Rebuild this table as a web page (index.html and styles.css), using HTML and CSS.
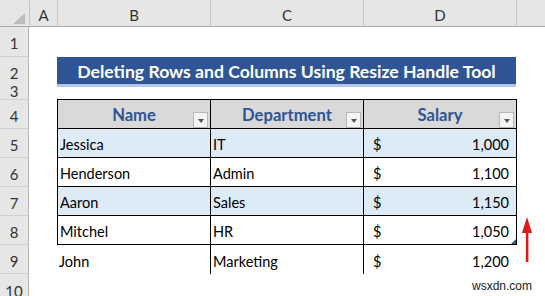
FILE: index.html
```html
<!DOCTYPE html>
<html>
<head>
<meta charset="utf-8">
<link rel="stylesheet" href="styles.css">
</head>
<body>
<div class="sheet">
  <div class="row row-head">
    <div class="corner"><span class="corner-tri"></span></div>
    <div class="ch">A</div>
    <div class="ch">B</div>
    <div class="ch">C</div>
    <div class="ch">D</div>
    <div class="ch"></div>
  </div>
  <div class="row row-1"><div class="rh">1</div></div>
  <div class="row"><div class="rh">2</div><div></div><div class="title">Deleting Rows and Columns Using Resize Handle Tool</div></div>
  <div class="row row-3"><div class="rh">3</div></div>
  <div class="row">
    <div class="rh">4</div><div></div>
    <div class="th">Name<span class="fb"></span></div>
    <div class="th">Department<span class="fb"></span></div>
    <div class="th th-last">Salary<span class="fb"></span></div>
  </div>
  <div class="row">
    <div class="rh">5</div><div></div>
    <div class="cell blue">Jessica</div>
    <div class="cell blue">IT</div>
    <div class="cell money blue"><span>$</span><span>1,000</span></div>
  </div>
  <div class="row">
    <div class="rh">6</div><div></div>
    <div class="cell">Henderson</div>
    <div class="cell">Admin</div>
    <div class="cell money"><span>$</span><span>1,100</span></div>
  </div>
  <div class="row">
    <div class="rh">7</div><div></div>
    <div class="cell blue">Aaron</div>
    <div class="cell blue">Sales</div>
    <div class="cell money blue"><span>$</span><span>1,150</span></div>
  </div>
  <div class="row">
    <div class="rh">8</div><div></div>
    <div class="cell">Mitchel</div>
    <div class="cell">HR</div>
    <div class="cell money"><span>$</span><span>1,050</span><span class="handle"></span></div>
  </div>
  <div class="row">
    <div class="rh">9</div><div></div>
    <div class="cell plain">John</div>
    <div class="cell plain lined">Marketing</div>
    <div class="cell money plain lined"><span>$</span><span>1,200</span></div>
  </div>
  <div class="row row-10"><div class="rh">10</div></div>
</div>
<svg class="arrow" width="16" height="50" viewBox="0 0 16 50">
  <polygon points="8,2 3,18 13,18" fill="#e0191b"/>
  <rect x="6.8" y="16" width="2.6" height="31" fill="#e0191b"/>
</svg>
<div class="mark">wsxdn.com</div>
</body>
</html>
```
FILE: styles.css
```css
* { box-sizing: border-box; }
html, body { margin: 0; padding: 0; }
body {
  width: 545px;
  height: 296px;
  overflow: hidden;
  position: relative;
  background: #fff;
  font-family: Lato, "Liberation Sans", sans-serif;
  color: #000;
}
.sheet { display: flex; flex-direction: column; }
.row {
  display: grid;
  grid-template-columns: 29px 28px 153px 153px 153px 1fr;
  height: 29px;
  flex: none;
}
.row-head {
  height: 27px;
  background: #e6e6e6;
  border-bottom: 1px solid #ababab;
}
.row-1 { height: 30px; }
.row-3 { height: 14px; }
.row-10 { height: 23px; }
.corner {
  display: flex;
  align-items: flex-end;
  justify-content: flex-end;
  padding: 0 4px 2px 0;
}
.corner-tri {
  width: 0; height: 0;
  border-left: 12px solid transparent;
  border-bottom: 11px solid #bcbcbc;
}
.ch {
  border-left: 1px solid #c6c6c6;
  display: flex;
  align-items: center;
  justify-content: center;
  padding-top: 3px;
  font-size: 15px;
  color: #333;
}
.rh {
  background: #e6e6e6;
  border-right: 1px solid #b5b5b5;
  border-bottom: 1px solid #d0d0d0;
  display: flex;
  align-items: center;
  justify-content: center;
  padding-top: 3px;
  font-size: 15px;
  color: #333;
  overflow: hidden;
}
.row-3 .rh { align-items: flex-end; padding-top: 0; line-height: 1; }
.row-10 .rh { align-items: flex-start; padding-top: 8px; border-bottom: none; }
.title {
  grid-column: span 3;
  height: 30px;
  background: #2f5597;
  border-bottom: 3px solid #b4c6e7;
  color: #fff;
  font-weight: bold;
  font-size: 17.6px;
  display: flex;
  align-items: center;
  justify-content: center;
  padding-top: 1px;
}
.th {
  position: relative;
  background: #d9d9d9;
  border-left: 1px solid #000;
  border-bottom: 1px solid #000;
  box-shadow: 0 -1px 0 #000;
  color: #2f5496;
  font-weight: bold;
  font-size: 16.6px;
  display: flex;
  align-items: center;
  justify-content: center;
  padding-top: 1px;
}
.th-last { box-shadow: 0 -1px 0 #000, 1px 0 0 #000, 1px -1px 0 #000; }
.fb {
  position: absolute;
  right: 2px;
  bottom: 0;
  width: 15px;
  height: 16px;
  background: #f4f4f4;
  border: 1px solid #b8b8b8;
  display: flex;
  align-items: center;
  justify-content: center;
}
.fb::after {
  content: "";
  width: 0; height: 0;
  margin-top: 2px;
  border-left: 3.5px solid transparent;
  border-right: 3.5px solid transparent;
  border-top: 4px solid #555;
}
.cell {
  position: relative;
  border-left: 1px solid #000;
  border-bottom: 1px solid #000;
  display: flex;
  align-items: center;
  padding: 3px 0 0 2px;
  font-size: 14.5px;
}
.cell.money {
  justify-content: space-between;
  padding: 3px 7px 0 9px;
  box-shadow: 1px 0 0 #000;
}
.blue { background: #ddebf7; }
.cell.plain { border-bottom: none; border-left: none; box-shadow: none; }
.cell.plain.lined { border-left: 1px solid #000; }
.handle {
  position: absolute;
  right: 0;
  bottom: 0;
  width: 0; height: 0;
  border-left: 5px solid transparent;
  border-bottom: 5px solid #2f4f8f;
}
.arrow {
  position: absolute;
  left: 519px;
  top: 215px;
}
.mark {
  position: absolute;
  left: 472px;
  top: 279px;
  font-family: "Liberation Sans", Arial, sans-serif;
  font-size: 12px;
  color: #222;
}
```
